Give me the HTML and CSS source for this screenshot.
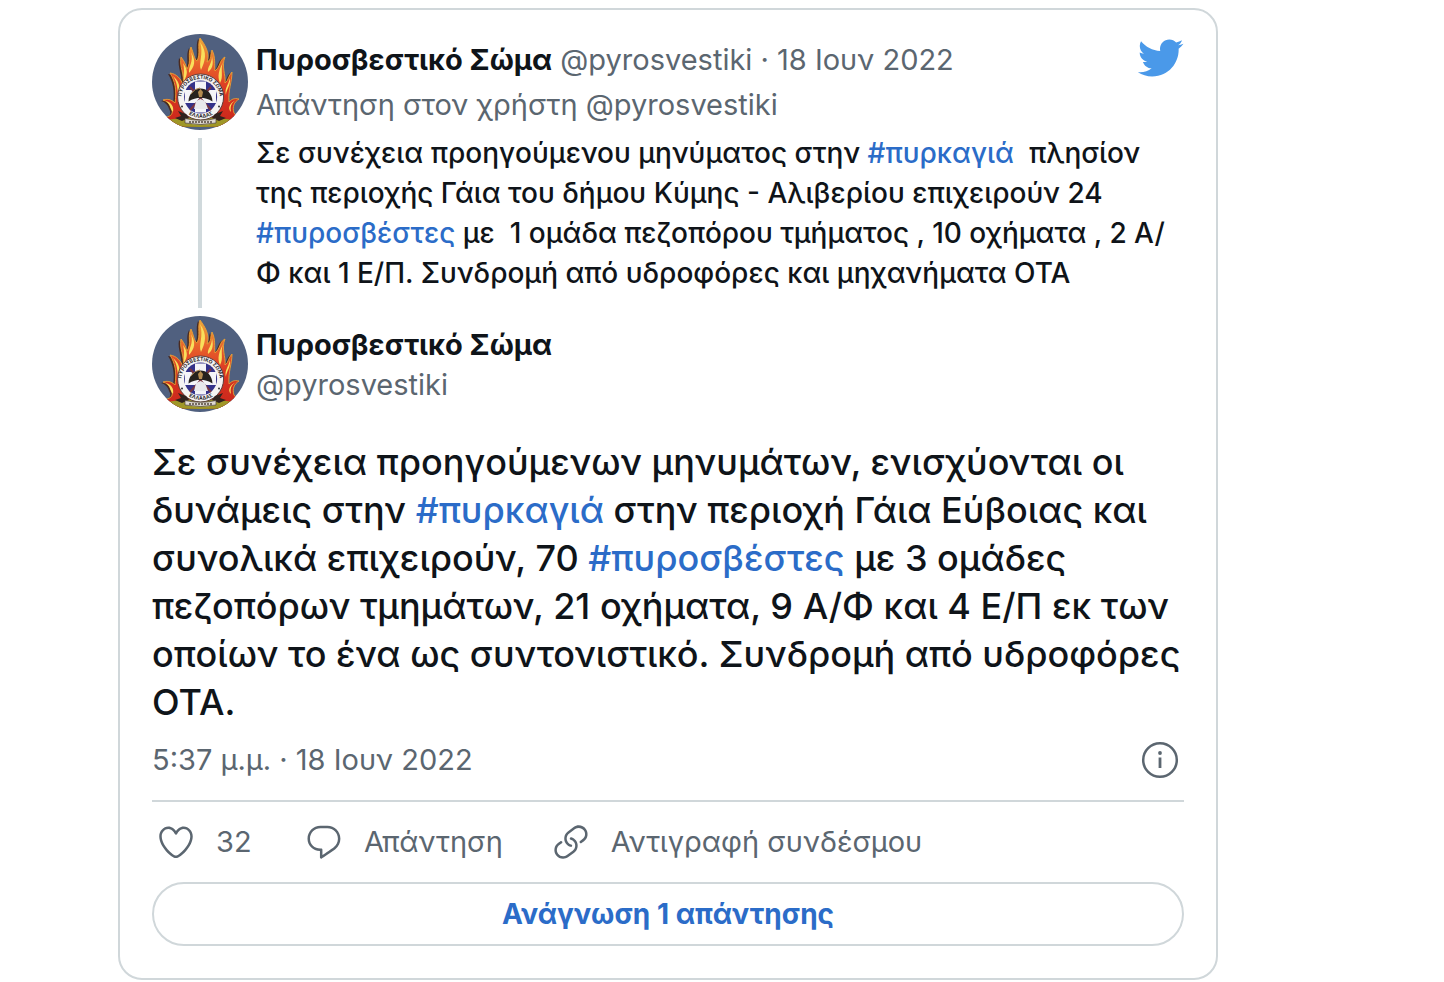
FILE: index.html
```html
<!DOCTYPE html>
<html lang="el">
<head>
<meta charset="utf-8">
<meta name="viewport" content="width=device-width, initial-scale=1">
<title>Πυροσβεστικό Σώμα</title>
<link rel="stylesheet" href="styles.css">
</head>
<body>
<svg class="sprite" aria-hidden="true">
  <defs>
    <clipPath id="disc"><circle cx="48" cy="48" r="48"/></clipPath>
    <linearGradient id="fire" x1="0" y1="0" x2="0" y2="1">
      <stop offset="0" stop-color="#f0a93a"/>
      <stop offset=".3" stop-color="#e8622c"/>
      <stop offset=".6" stop-color="#d93622"/>
      <stop offset="1" stop-color="#c9261b"/>
    </linearGradient>
    <path id="arc-top" d="M30.200 69.500A19.200 19.200 0 1 1 67 69.500"/>
    <path id="arc-bottom" d="M36 79.500A21.500 21.500 0 0 0 62 79.500"/>
    <path id="flames" d="M10 84C20 83 22 79 19 74C18 70 15 67 11 66C17 64 21 67 23 69C25 56 23 47 18 39C25 40 29 45 31 51C33 40 27 33 29 23C33 28 34 32 35 35C40 27 35 21 39 13C42 20 42 25 45 27C49 19 45 12 48 4C54 12 58 20 55 28C60 26 58 20 60 16C64 24 62 30 63 37C69 32 67 26 73 23C69 32 74 41 73 49C77 46 76 42 80 38C80 48 76 56 77 68C80 65 82 64 87 65C82 68 80 73 82 79C85 84 90 83 94 85L80 92H16Z"/>
    <symbol id="emblem" viewBox="0 0 96 96">
      <g clip-path="url(#disc)">
        <rect width="96" height="96" fill="#50607f"/>
        <use href="#flames" x="-2" y="1" fill="#4a2a20"/>
        <use href="#flames" fill="url(#fire)" stroke="#e9a236" stroke-width=".9"/>
        <path fill="#f9df5c" d="M21 42C27 47 29 53 26 59C25 52 25 48 21 42ZM31 29C36 36 36 40 32 47C31 39 33 36 31 29ZM39 18C44 27 43 32 37 39C36 32 42 28 39 18ZM48 8C56 19 53 27 49 36C46 29 52 20 48 8ZM60 22C62 31 60 35 56 38C55 33 60 30 60 22ZM71 28C68 36 72 42 68 49C65 42 67 36 71 28ZM78 44C79 51 74 56 74 61C72 55 76 52 78 44ZM14 67C20 69 22 73 21 78C18 75 19 71 14 67ZM84 66C79 69 78 73 79 78C75 74 78 69 84 66Z"/>
        <path fill="#9f9727" d="M14 86Q48 80 82 86L77 91Q48 95 20 91Z"/>
        <circle cx="48.600" cy="63" r="23" fill="#f5f3f2" stroke="#5d3e3b" stroke-width="1"/>
        <circle cx="48.600" cy="63" r="16.500" fill="#34328a"/>
        <path fill="#f4f4f8" d="M43 47.500h11v8.500h10v13h-10v9.500h-11V69H33V56h10Z"/>
        <path d="M38 53L59 76M59 53L38 76" stroke="#793540" stroke-width="2"/>
        <path fill="#e8e8ec" d="M44 67L48.500 65L53 67L56 75H42Z"/>
        <path fill="#26211e" d="M36.500 67.500C37 50 60 50 60.500 67.500Q48.500 60 36.500 67.500Z"/>
        <path fill="#b58b50" d="M46 58L48.500 55L51 58L50 63H47Z"/>
        <path d="M39 60Q43 54 48 54" fill="none" stroke="#a8804b" stroke-width="1"/>
        <text class="emblem-text"><textPath href="#arc-top" startOffset="50%">ΠΥΡΟΣΒΕΣΤΙΚΟ ΣΩΜΑ</textPath></text>
        <text class="emblem-text"><textPath href="#arc-bottom" startOffset="50%">ΕΛΛΑΔΑΣ</textPath></text>
        <circle cx="30" cy="72.500" r="1" fill="#333"/><circle cx="67" cy="72.500" r="1" fill="#333"/>
        <path fill="#30221e" d="M26 77L34 80L37 84L30 87L23 84L29 82ZM71 77L63 80L60 84L67 87L74 84L68 82Z"/>
        <path fill="#ded9d1" stroke="#4a4038" stroke-width=".7" d="M33 84.500Q49 88 64 84.500V89Q49 92 33 89Z"/>
        <path d="M37 88H60" stroke="#55483d" stroke-width="1.300" stroke-dasharray="2 1"/>
      </g>
    </symbol>
  </defs>
</svg>

<article class="card">
  <section class="thread">
    <div class="rail">
      <a href="#profile" aria-label="Πυροσβεστικό Σώμα"><svg class="avatar" aria-hidden="true"><use href="#emblem"/></svg></a>
      <span class="rail-line"></span>
    </div>
    <div class="parent">
      <header class="parent-head">
        <div class="byline"><a class="name" href="#profile">Πυροσβεστικό Σώμα</a> <a class="muted" href="#profile">@pyrosvestiki</a> <span class="muted">·</span> <a class="muted" href="#parent">18 Ιουν 2022</a></div>
        <a class="bird" href="#twitter" aria-label="Twitter"><svg viewBox="0 0 24 24" aria-hidden="true"><path d="M23.643 4.937c-.835.37-1.732.62-2.675.733.962-.576 1.700-1.490 2.048-2.578-.9.534-1.897.922-2.958 1.130-.85-.904-2.060-1.470-3.400-1.470-2.572 0-4.658 2.086-4.658 4.660 0 .364.042.718.120 1.060-3.873-.195-7.304-2.050-9.602-4.868-.4.690-.63 1.490-.63 2.342 0 1.616.823 3.043 2.072 3.878-.764-.025-1.482-.234-2.110-.583v.06c0 2.257 1.605 4.140 3.737 4.568-.392.106-.803.162-1.227.162-.3 0-.593-.028-.877-.082.593 1.850 2.313 3.198 4.352 3.234-1.595 1.250-3.604 1.995-5.786 1.995-.376 0-.747-.022-1.112-.065 2.062 1.323 4.510 2.093 7.140 2.093 8.570 0 13.255-7.098 13.255-13.254 0-.2-.005-.402-.014-.602.91-.658 1.700-1.477 2.323-2.410z"/></svg></a>
      </header>
      <a class="reply-to muted" href="#parent">Απάντηση στον χρήστη @pyrosvestiki</a>
      <p class="parent-text">Σε συνέχεια προηγούμενου μηνύματος στην <a href="#tag">#πυρκαγιά</a>&nbsp; πλησίον της περιοχής Γάια του δήμου Κύμης - Αλιβερίου επιχειρούν 24 <a href="#tag">#πυροσβέστες</a> με&nbsp; 1 ομάδα πεζοπόρου τμήματος , 10 οχήματα , 2 Α/<wbr>Φ&nbsp;και 1 Ε/Π. Συνδρομή από υδροφόρες και μηχανήματα ΟΤΑ</p>
    </div>
  </section>

  <header class="author">
    <a href="#profile" aria-label="Πυροσβεστικό Σώμα"><svg class="avatar" aria-hidden="true"><use href="#emblem"/></svg></a>
    <div class="author-names">
      <a class="name" href="#profile">Πυροσβεστικό Σώμα</a>
      <a class="muted" href="#profile">@pyrosvestiki</a>
    </div>
  </header>

  <p class="tweet-text">Σε συνέχεια προηγούμενων μηνυμάτων, ενισχύονται οι δυνάμεις στην <a href="#tag">#πυρκαγιά</a> στην περιοχή Γάια Εύβοιας και συνολικά επιχειρούν, 70 <a href="#tag">#πυροσβέστες</a> με 3 ομάδες πεζοπόρων τμημάτων, 21 οχήματα, 9 Α/Φ και 4 Ε/Π εκ των οποίων το ένα ως συντονιστικό. Συνδρομή από υδροφόρες ΟΤΑ.</p>

  <div class="meta">
    <a class="muted" href="#tweet">5:37 μ.μ. · 18 Ιουν 2022</a>
    <button class="info" type="button" aria-label="Πληροφορίες"><svg class="icon" viewBox="0 0 40 40" aria-hidden="true"><circle cx="20" cy="20" r="16.800" fill="none" stroke="currentColor" stroke-width="2.500"/><circle cx="20" cy="13" r="1.900"/><path d="M18.600 17.500h2.800V28h-2.800z"/></svg></button>
  </div>

  <div class="actions">
    <button class="action" type="button"><svg class="icon" viewBox="0 0 24 24" aria-hidden="true"><path fill-rule="evenodd" d="M12 21.638h-.014C9.403 21.590 1.950 14.856 1.950 8.478c0-3.064 2.525-5.754 5.403-5.754 2.290 0 3.830 1.580 4.646 2.730.814-1.148 2.354-2.730 4.645-2.730 2.880 0 5.404 2.690 5.404 5.755 0 6.376-7.454 13.110-10.037 13.157H12zM7.354 4.225c-2.080 0-3.903 1.988-3.903 4.255 0 5.740 7.034 11.596 8.550 11.658 1.518-.062 8.550-5.917 8.550-11.653 0-2.267-1.823-4.255-3.903-4.255-2.528 0-3.940 2.936-3.952 2.965-.23.562-1.156.562-1.387 0-.014-.03-1.425-2.965-3.954-2.965z"/></svg><span class="count">32</span></button>
    <button class="action" type="button"><svg class="icon" viewBox="0 0 24 24" aria-hidden="true"><path fill-rule="evenodd" d="M14.046 2.242l-4.148-.01h-.002c-4.374 0-7.800 3.427-7.800 7.802 0 4.098 3.186 7.206 7.465 7.370v3.828c0 .108.044.286.120.403.142.225.384.347.632.347.138 0 .277-.038.402-.118.264-.168 6.473-4.140 8.088-5.506 1.902-1.610 3.040-3.970 3.043-6.312v-.017c-.006-4.367-3.430-7.787-7.800-7.788zm3.787 12.972c-1.134.960-4.862 3.405-6.772 4.643V16.670c0-.414-.335-.75-.75-.75h-.396c-3.660 0-6.318-2.476-6.318-5.886 0-3.534 2.768-6.302 6.300-6.302l4.147.01h.002c3.532 0 6.300 2.766 6.302 6.296-.003 1.910-.942 3.844-2.514 5.176z"/></svg><span>Απάντηση</span></button>
    <button class="action" type="button"><svg class="icon" viewBox="0 0 24 24" aria-hidden="true"><path d="M11.960 14.945c-.067 0-.136-.01-.203-.027-1.130-.318-2.097-.986-2.795-1.932-.832-1.125-1.176-2.508-.968-3.893s.942-2.605 2.068-3.438l3.530-2.608c2.322-1.716 5.610-1.224 7.330 1.100.830 1.127 1.175 2.510.967 3.895s-.943 2.605-2.070 3.438l-1.480 1.094c-.333.246-.804.175-1.050-.158-.246-.334-.176-.804.158-1.050l1.480-1.095c.803-.592 1.327-1.463 1.476-2.450.148-.988-.098-1.975-.69-2.778-1.225-1.656-3.572-2.010-5.230-.784l-3.530 2.608c-.802.593-1.326 1.464-1.475 2.450-.15.990.097 1.975.690 2.778.498.675 1.187 1.150 1.992 1.377.4.114.633.528.520.928-.092.330-.394.547-.722.547z"/><path d="M7.270 22.054c-1.610 0-3.197-.735-4.225-2.125-.832-1.127-1.176-2.510-.968-3.894s.943-2.605 2.070-3.438l1.478-1.094c.334-.245.805-.175 1.050.158s.177.804-.157 1.050l-1.480 1.095c-.803.593-1.326 1.464-1.475 2.450-.148.990.097 1.975.690 2.778 1.225 1.657 3.570 2.010 5.230.785l3.528-2.608c1.658-1.225 2.010-3.570.785-5.230-.498-.674-1.187-1.150-1.992-1.376-.4-.113-.633-.527-.52-.927.112-.4.528-.63.926-.522 1.130.318 2.096.986 2.794 1.932 1.717 2.324 1.224 5.612-1.100 7.330l-3.530 2.608c-.933.693-2.023 1.026-3.105 1.026z"/></svg><span>Αντιγραφή συνδέσμου</span></button>
  </div>

  <a class="read-replies" href="#replies">Ανάγνωση 1 απάντησης</a>
</article>
</body>
</html>
```
FILE: styles.css
```css
* { box-sizing: border-box; }

body {
  margin: 0;
  padding: 8px 226px 2px 118px;
  background: #fff;
  color: #0f1419;
  font-family: Inter, "Liberation Sans", sans-serif;
  font-size: 29px;
  line-height: 40px;
}

a { color: #2b6cc8; text-decoration: none; }
a:hover { text-decoration: underline; }
p { margin: 0; }
svg { display: block; fill: currentColor; }

button {
  margin: 0;
  padding: 0;
  border: 0;
  background: none;
  color: inherit;
  font: inherit;
  cursor: pointer;
}

.sprite { position: absolute; width: 0; height: 0; }

.emblem-text {
  fill: #29262b;
  font-size: 5px;
  font-weight: 700;
  text-anchor: middle;
}

.card {
  padding: 24px 32px 32px;
  border: 2px solid #d0d7da;
  border-radius: 24px;
}

.thread { display: flex; gap: 8px; }

.rail {
  display: flex;
  flex: none;
  flex-direction: column;
  align-items: center;
  gap: 8px;
  padding-bottom: 8px;
}

.rail-line { flex: 1; width: 4px; background: #d0d9dc; }
.avatar { width: 96px; height: 96px; }

.parent { flex: 1; min-width: 0; padding-bottom: 23px; }
.parent-head { display: flex; justify-content: space-between; height: 51px; }
.parent-text { font-size: 28px; font-weight: 450; }
.byline { padding-top: 6px; }
.name { color: #0f1419; font-weight: 700; }
.muted { color: #5b6670; }
.bird svg { width: 48px; height: 48px; color: #4a99e9; }
.reply-to { display: block; margin-bottom: 8px; }

.author { display: flex; align-items: center; gap: 8px; }
.author-names { display: flex; flex-direction: column; padding-top: 2px; }

.tweet-text {
  margin-top: 26px;
  font-size: 36px;
  font-weight: 450;
  line-height: 48px;
}

.meta {
  display: flex;
  align-items: center;
  justify-content: space-between;
  margin-top: 14px;
  padding: 0 4px 20px 0;
  border-bottom: 2px solid #d0d7da;
}

.icon { width: 40px; height: 40px; }

.actions {
  display: flex;
  gap: 48px;
  padding: 20px 4px;
  color: #5b6670;
}

.info { color: #5b6670; }
.action { display: flex; align-items: center; gap: 20px; }
.count { min-width: 40px; text-align: left; }

.read-replies {
  display: block;
  padding: 10px;
  border: 2px solid #d0d7da;
  border-radius: 32px;
  font-size: 28px;
  font-weight: 700;
  text-align: center;
}
```
